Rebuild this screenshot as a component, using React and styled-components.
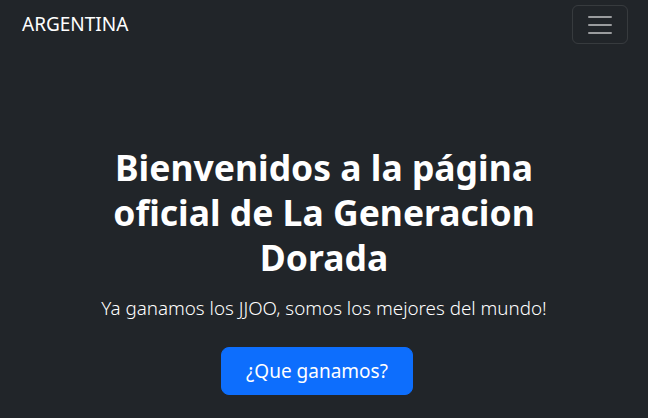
import React from 'react';
import styled, { createGlobalStyle } from 'styled-components';

const GlobalStyle = createGlobalStyle`
	html, body {
		margin: 0;
		padding: 0;
		background: #212529;
	}
	body {
		font-family: "Noto Sans", "Open Sans", "Liberation Sans", sans-serif;
		color: #fff;
	}
	* { box-sizing: border-box; }
`;

const Page = styled.div`
	min-height: 100vh;
	background: #212529;
`;

const Navbar = styled.nav`
	display: flex;
	align-items: center;
	justify-content: space-between;
	padding: 5px 20px 5px 22px;
`;

const Brand = styled.a`
	font-size: 19px;
	color: #fff;
	text-decoration: none;
	line-height: 1.5;
`;

const Toggler = styled.button`
	width: 56px;
	height: 39px;
	padding: 0;
	display: flex;
	align-items: center;
	justify-content: center;
	background: transparent;
	border: 1px solid rgba(255, 255, 255, 0.1);
	border-radius: 6px;
	cursor: pointer;
`;

const Hero = styled.section`
	padding: 96px 24px 0;
	text-align: center;
`;

const Title = styled.h1`
	margin: 0 auto 13px;
	max-width: 460px;
	font-size: 35.5px;
	line-height: 45px;
	font-weight: 700;
`;

const Lead = styled.p`
	margin: 0 0 24px;
	font-size: 18.8px;
	font-weight: 300;
	line-height: 30px;
`;

const Actions = styled.div`
	display: flex;
	justify-content: center;
	padding-right: 14px;
`;

const Button = styled.button`
	width: 192px;
	height: 48px;
	font-family: inherit;
	font-size: 19px;
	color: #fff;
	background: #0d6efd;
	border: 1px solid #0d6efd;
	border-radius: 8px;
	cursor: pointer;
`;

export default function App() {
	return (
		<Page>
			<GlobalStyle />
			<Navbar>
				<Brand href="#">ARGENTINA</Brand>
				<Toggler aria-label="menu">
					<svg width="30" height="30" viewBox="0 0 30 30">
						<path d="M4 7h22M4 15h22M4 23h22" stroke="rgba(255,255,255,0.55)" strokeWidth="2" strokeLinecap="round" />
					</svg>
				</Toggler>
			</Navbar>
			<Hero>
				<Title>Bienvenidos a la página oficial de La Generacion Dorada</Title>
				<Lead>Ya ganamos los JJOO, somos los mejores del mundo!</Lead>
				<Actions>
					<Button>¿Que ganamos?</Button>
				</Actions>
			</Hero>
		</Page>
	);
}
